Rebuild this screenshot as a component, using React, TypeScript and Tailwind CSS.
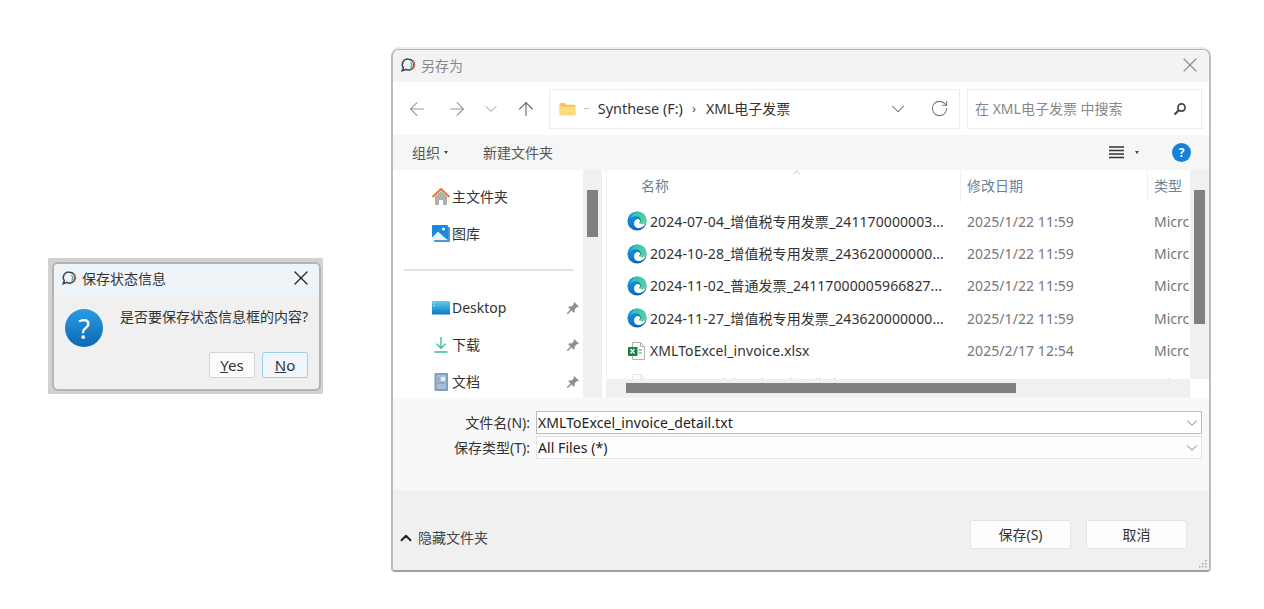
import { ArrowLeft, ArrowRight, ArrowUp, ChevronDown, ChevronUp, RotateCw, X } from 'lucide-react';

const fileRows = [
  { name: '2024-07-04_增值税专用发票_241170000003...', date: '2025/1/22 11:59' },
  { name: '2024-10-28_增值税专用发票_243620000000...', date: '2025/1/22 11:59' },
  { name: '2024-11-02_普通发票_24117000005966827...', date: '2025/1/22 11:59' },
  { name: '2024-11-27_增值税专用发票_243620000000...', date: '2025/1/22 11:59' },
];

function AppIcon() {
  return (
    <svg viewBox="0 0 16 16" className="h-[16px] w-[16px] shrink-0">
      <path d="M8.500 2.200a5.400 5.400 0 1 1-2.600 10.100L2.200 13.800l1.100-3.300A5.300 5.300 0 0 1 8.500 2.200Z" fill="none" stroke="#36464f" strokeWidth="1.500" />
      <path d="M10.400 5.200a3.400 3.400 0 0 1 0 5.400" fill="none" stroke="#2bb8c4" strokeWidth="1.400" />
      <path d="M12.600 3.600a5.400 5.400 0 0 1 0 8.400" fill="none" stroke="#e8604c" strokeWidth="1.500" />
    </svg>
  );
}

function EdgeIcon() {
  return (
    <svg viewBox="0 0 20 20" className="h-[20px] w-[20px] shrink-0">
      <defs>
        <linearGradient id="edgeBlue" x1="0" y1="0" x2="0.6" y2="1">
          <stop offset="0" stopColor="#1c9bea" />
          <stop offset="1" stopColor="#0a66bd" />
        </linearGradient>
        <linearGradient id="edgeGreen" x1="0" y1="0" x2="1" y2="1">
          <stop offset="0" stopColor="#2fb5c9" />
          <stop offset="1" stopColor="#62dc7c" />
        </linearGradient>
      </defs>
      <circle cx="10" cy="10" r="9.600" fill="url(#edgeBlue)" />
      <path d="M3 7.500C4.500 2.600 9 .4 10 .4c5.600 0 9.600 4.400 9.600 9.200 0 2.600-2 3.600-4.200 3.600-1.600 0-3-.5-3.600-1.200 1.400-.4 2-1.400 2-2.400C13.800 7 11.800 5.200 9.200 5.200 6.500 5.200 4.300 6 3 7.500Z" fill="url(#edgeGreen)" />
      <path d="M7 12.800c0-2.600 1.500-4.700 3.900-4.700 1.300 0 2.100.9 2.100 1.800 0 .9-.6 1.500-1.300 1.900.8.900 2.200 1.400 3.700 1.400 1 0 2.200-.3 3.300-1.100-.9 2.500-3.300 5-6.900 5-2.800 0-4.800-2.200-4.800-4.300Z" fill="#fff" />
    </svg>
  );
}

function ExcelIcon() {
  return (
    <svg viewBox="0 0 20 20" className="h-[20px] w-[20px] shrink-0">
      <path d="M5.500 1.500h8l4 4v13h-12Z" fill="#fff" stroke="#b4b4b4" />
      <path d="M13.500 1.500v4h4" fill="none" stroke="#b4b4b4" />
      <rect x="1" y="6" width="9.500" height="9" rx="1" fill="#17804a" />
      <path d="M3.500 8l4 4.500M7.500 8l-4 4.500" stroke="#fff" strokeWidth="1.300" />
      <path d="M11.500 9h3.500M11.500 12h3.500" stroke="#7cc29a" strokeWidth="1.300" />
    </svg>
  );
}

function HomeIcon() {
  return (
    <svg viewBox="0 0 20 20" className="h-[20px] w-[20px]">
      <path d="M4 9.500 10 4l6 5.500V18h-4v-5H8v5H4Z" fill="#b0b0b0" />
      <path d="M1.500 10 10 2l8.500 8" fill="none" stroke="#e8762a" strokeWidth="1.900" />
    </svg>
  );
}

function GalleryIcon() {
  return (
    <svg viewBox="0 0 20 20" className="h-[20px] w-[20px]">
      <rect x="3" y="3" width="16" height="15" rx="1" fill="#4a97dc" />
      <rect x="1" y="1" width="16" height="15" rx="1" fill="#1a87e0" />
      <circle cx="12.500" cy="5" r="1.500" fill="#fff" />
      <path d="M1 13.500 7 7.500l6 5.500 4 3H1Z" fill="#e9f3fb" />
    </svg>
  );
}

function DesktopIcon() {
  return (
    <svg viewBox="0 0 20 20" className="h-[20px] w-[20px]">
      <defs>
        <linearGradient id="desktopFill" x1="0" y1="0" x2="0" y2="1">
          <stop offset="0" stopColor="#5fd0ec" />
          <stop offset="1" stopColor="#0d76c4" />
        </linearGradient>
      </defs>
      <rect x="1" y="3" width="18" height="13.500" rx="0.500" fill="url(#desktopFill)" />
      <path d="M2.500 5h1M2.500 7.500h1" stroke="#fff" strokeWidth="1" />
    </svg>
  );
}

function DownloadIcon() {
  return (
    <svg viewBox="0 0 20 20" className="h-[20px] w-[20px]" fill="none" stroke="#3cc39a" strokeWidth="1.400">
      <path d="M10 2v11M5.500 8.800 10 13.200l4.500-4.400" />
      <path d="M3.500 17h13" strokeWidth="1.600" />
    </svg>
  );
}

function DocIcon() {
  return (
    <svg viewBox="0 0 20 20" className="h-[20px] w-[20px]">
      <rect x="3.500" y="1" width="13.500" height="18" rx="1" fill="#7f9fc2" />
      <rect x="5.500" y="3" width="9.500" height="14" fill="#a9bfd6" />
      <rect x="10" y="5" width="4" height="4" fill="#e8eef5" />
      <path d="M6.500 6h2M6.500 8h2M6.500 11h7" stroke="#6d8db0" />
    </svg>
  );
}

function PinIcon() {
  return (
    <svg viewBox="0 0 14 14" className="h-[14px] w-[14px]">
      <path d="M8.300 1 13 5.700l-1.200.6-.8-.3-2.400 2.400.2 2.300-1 1-2.200-2.200L2 13l-1 0 0-1 3.400-3.600L2.300 6.300l1-1 2.300.2L8 3.100l-.3-.8Z" fill="#8f8f8f" />
    </svg>
  );
}

function SideItem({ icon, label, pinned = false }: { icon: React.ReactNode; label: string; pinned?: boolean }) {
  return (
    <div className="flex h-[37px] shrink-0 items-center pl-[38px] pr-[3px]">
      <span className="flex w-[21px] shrink-0 justify-start">{icon}</span>
      <span className="flex-1 text-[14px] text-[#333]">{label}</span>
      {pinned && <PinIcon />}
    </div>
  );
}

function FormRow({ label, value, active = false }: { label: string; value: string; active?: boolean }) {
  return (
    <div className="flex h-[25px] items-center">
      <span className="w-[137px] text-right text-[14px] text-[#333]">{label}</span>
      <div className={active
        ? 'ml-[6px] flex h-[23px] flex-1 items-center justify-between border border-[#bdbdbd] bg-white pl-[1px]'
        : 'ml-[6px] flex h-[23px] flex-1 items-center justify-between border border-[#e4e4e4] bg-[#fdfdfd] pl-[1px]'}>
        <span className="text-[14px] tracking-[0.07px] text-[#222]">{value}</span>
        <ChevronDown className="h-[18px] w-[18px] text-[#777]" strokeWidth={1.3} />
      </div>
    </div>
  );
}

export default function App() {
  return (
    <div className="relative h-[609px] w-[1264px] overflow-hidden bg-white font-['Noto_Sans','Noto_Sans_CJK_SC',sans-serif]">
      {/* small confirm box */}
      <div className="absolute left-[48px] top-[258px] h-[136px] w-[275px] bg-[#d2d2d2] pb-[3px] pl-[4px] pr-[2px] pt-[4px]">
        <div className="flex h-full flex-col overflow-hidden rounded-[6px] border-2 border-[#b4b4b4] bg-[#f0f0f0]">
          <div className="flex h-[31px] shrink-0 items-center bg-[#eff4f8] pb-[3px] pl-[7px] pr-[6px]">
            <AppIcon />
            <span className="ml-[5px] flex-1 text-[14px] text-[#333]">保存状态信息</span>
            <X className="h-[24px] w-[24px] text-[#222]" strokeWidth={1.3} />
          </div>
          <div className="flex flex-1 flex-col pl-[11px] pr-[11px]">
            <div className="mt-[14px] flex items-start">
              <div className="flex h-[38px] w-[38px] shrink-0 items-center justify-center rounded-full bg-linear-to-b from-[#2a9be3] to-[#0b69b4] text-[27px] leading-none text-white">?</div>
              <span className="ml-[17px] whitespace-nowrap text-[14px] leading-[16px] text-[#333]">是否要保存状态信息框的内容?</span>
            </div>
            <div className="mt-[5px] flex justify-end gap-[7px]">
              <button className="h-[26px] w-[46px] rounded-[2px] border border-[#d4d4d4] bg-[#fbfbfb] text-[15px] text-[#333]"><u>Y</u>es</button>
              <button className="h-[26px] w-[46px] rounded-[2px] border border-[#9fd0ee] bg-[#f0f6fb] text-[15px] text-[#333]"><u>N</u>o</button>
            </div>
          </div>
        </div>
      </div>

      {/* save as window */}
      <div className="absolute left-[391px] top-[49px] flex h-[523px] w-[820px] flex-col overflow-hidden rounded-t-[8px] rounded-b-[4px] border-t border-r-2 border-b-2 border-l-2 border-t-[#b4b4b4] border-r-[#bcbcbc] border-b-[#a2a2a2] border-l-[#bcbcbc] bg-white shadow-[0_-2px_0_#ececec]">
        <div className="flex h-[32px] shrink-0 items-center bg-[#f3f3f3] pb-[2px] pl-[7px] pr-[7px]">
          <AppIcon />
          <span className="ml-[5px] flex-1 text-[14px] text-[#888]">另存为</span>
          <X className="h-[24px] w-[24px] text-[#8a8a8a]" strokeWidth={1.1} />
        </div>

        <div className="flex h-[53px] shrink-0 items-center bg-white pl-[13px] pr-[7px]">
          <ArrowLeft className="h-[22px] w-[22px] shrink-0 text-[#999]" strokeWidth={1.2} />
          <ArrowRight className="ml-[18px] h-[22px] w-[22px] shrink-0 text-[#999]" strokeWidth={1.2} />
          <ChevronDown className="ml-[13px] h-[20px] w-[20px] shrink-0 text-[#999]" strokeWidth={1.2} />
          <ArrowUp className="ml-[14px] h-[22px] w-[22px] shrink-0 text-[#666]" strokeWidth={1.2} />
          <div className="ml-[12px] flex h-[40px] w-[411px] shrink-0 items-center border border-[#ececec] pl-[9px] pr-[10px]">
            <svg viewBox="0 0 18 16" className="h-[14px] w-[17px]">
              <path d="M0 2a1 1 0 0 1 1-1h5l2 2h9a1 1 0 0 1 1 1v10a1 1 0 0 1-1 1H1a1 1 0 0 1-1-1Z" fill="#f6c34c" />
              <path d="M0 5h18v9a1 1 0 0 1-1 1H1a1 1 0 0 1-1-1Z" fill="#fcdc7a" />
            </svg>
            <span className="ml-[8px] text-[9px] leading-none text-[#777]">··</span>
            <span className="ml-[9px] text-[14.4px] text-[#333]">Synthese (F:)</span>
            <span className="ml-[9px] text-[13px] text-[#555]">›</span>
            <span className="ml-[10px] flex-1 text-[14px] text-[#333]">XML电子发票</span>
            <ChevronDown className="h-[22px] w-[22px] text-[#666]" strokeWidth={1.1} />
            <RotateCw className="ml-[21px] h-[19px] w-[19px] text-[#777]" strokeWidth={1.3} />
          </div>
          <div className="ml-[7px] flex h-[40px] flex-1 items-center justify-between border border-[#ececec] pl-[7px] pr-[14px]">
            <span className="text-[14px] text-[#888]">在 XML电子发票 中搜索</span>
            <svg viewBox="0 0 14 14" className="h-[14px] w-[14px]" fill="none" stroke="#444">
              <circle cx="8.500" cy="5.500" r="3.600" strokeWidth="1.700" />
              <path d="M6 8 1.500 12.500" strokeWidth="2.200" />
            </svg>
          </div>
        </div>

        <div className="flex h-[35px] shrink-0 items-center bg-[#f5f6f6] pl-[19px] pr-[18px]">
          <span className="text-[14px] text-[#555]">组织</span>
          <span className="ml-[4px] h-0 w-0 border-x-[2px] border-t-[3px] border-x-transparent border-t-[#444]" />
          <span className="ml-[35px] flex-1 text-[14px] text-[#555]">新建文件夹</span>
          <svg viewBox="0 0 15 13" className="h-[13px] w-[15px]" stroke="#333" strokeWidth="1.300">
            <path d="M0 1h15M0 4.500h15M0 8h15M0 11.500h15" />
          </svg>
          <span className="ml-[11px] h-0 w-0 border-x-[2px] border-t-[3px] border-x-transparent border-t-[#444]" />
          <span className="ml-[33px] flex h-[19px] w-[19px] items-center justify-center rounded-full bg-[#1283d8] text-[12px] font-bold leading-none text-white">?</span>
        </div>

        <div className="flex h-[228px] shrink-0">
          <div className="flex w-[190px] shrink-0 flex-col overflow-hidden pt-[8px]">
            <SideItem icon={<HomeIcon />} label="主文件夹" />
            <SideItem icon={<GalleryIcon />} label="图库" />
            <div className="ml-[11px] mr-[9px] mt-[17px] mb-[18px] h-[2px] shrink-0 bg-[#e2e2e2]" />
            <SideItem icon={<DesktopIcon />} label="Desktop" pinned />
            <SideItem icon={<DownloadIcon />} label="下载" pinned />
            <SideItem icon={<DocIcon />} label="文档" pinned />
          </div>
          <div className="w-[19px] shrink-0 bg-[#f0f0f0] px-[4px] pt-[20px]">
            <div className="h-[47px] bg-[#808080]" />
          </div>

          <div className="ml-[4px] flex min-w-0 flex-1 flex-col border-l border-[#f0f0f0]">
            <div className="relative flex min-h-0 flex-1 flex-col overflow-hidden">
              <div className="flex h-[35px] shrink-0 items-start text-[14px] text-[#6f8296]">
                <span className="ml-[34px] w-[319px] leading-[32px]">名称</span>
                <span className="w-[187px] border-l border-[#f0f0f0] pl-[6px] leading-[32px]">修改日期</span>
                <span className="border-l border-[#f0f0f0] pl-[6px] leading-[32px]">类型</span>
              </div>
              <ChevronUp className="absolute left-[184px] top-[-3px] h-[11px] w-[11px] text-[#999]" strokeWidth={1.4} />
              {fileRows.map((row) => (
                <div key={row.name} className="flex h-[32.4px] shrink-0 items-center overflow-hidden">
                  <span className="ml-[20px] w-[23px] shrink-0"><EdgeIcon /></span>
                  <span className="w-[317px] shrink-0 text-[14px] tracking-[0.09px] text-[#333]">{row.name}</span>
                  <span className="w-[187px] shrink-0 text-[14px] tracking-[0.07px] text-[#777]">{row.date}</span>
                  <span className="text-[14px] text-[#777]">Micrc</span>
                </div>
              ))}
              <div className="flex h-[32.4px] shrink-0 items-center overflow-hidden">
                <span className="ml-[20px] w-[23px] shrink-0"><ExcelIcon /></span>
                <span className="w-[317px] shrink-0 text-[14px] tracking-[0.09px] text-[#333]">XMLToExcel_invoice.xlsx</span>
                <span className="w-[187px] shrink-0 text-[14px] tracking-[0.07px] text-[#777]">2025/2/17 12:54</span>
                <span className="text-[14px] text-[#777]">Micrc</span>
              </div>
              <div className="flex h-[32.4px] shrink-0 items-center overflow-hidden opacity-30">
                <span className="ml-[20px] w-[23px] shrink-0"><ExcelIcon /></span>
                <span className="w-[317px] shrink-0 text-[14px] text-[#333]">XMLToExcel_invoice_detail.xlsx</span>
                <span className="w-[187px] shrink-0 text-[14px] text-[#777]">2025/2/17 12:54</span>
                <span className="text-[14px] text-[#777]">Micrc</span>
              </div>
            </div>
            <div className="h-[19px] shrink-0 bg-[#f0f0f0] pl-[19px] pt-[4px]">
              <div className="h-[10px] w-[390px] bg-[#808080]" />
            </div>
          </div>

          <div className="flex w-[19px] shrink-0 flex-col">
            <div className="flex-1 bg-[#f0f0f0] px-[4px] pt-[20px]">
              <div className="h-[134px] bg-[#808080]" />
            </div>
            <div className="h-[19px] bg-white" />
          </div>
        </div>

        <div className="flex h-[92px] shrink-0 flex-col bg-[#f8f8f8] pr-[7px] pt-[12px]">
          <FormRow label="文件名(N):" value="XMLToExcel_invoice_detail.txt" active />
          <FormRow label="保存类型(T):" value="All Files (*)" />
        </div>

        <div className="relative flex flex-1 items-end justify-between bg-[#f0f0f0] pb-[21px] pl-[4px] pr-[22px]">
          <div className="flex items-center pb-[1px]">
            <ChevronUp className="h-[18px] w-[18px] text-[#222]" strokeWidth={2.6} />
            <span className="ml-[3px] text-[14px] text-[#444]">隐藏文件夹</span>
          </div>
          <div className="flex gap-[15px]">
            <button className="h-[29px] w-[101px] rounded-[2px] border border-[#e4e4e4] bg-[#fdfdfd] text-[14px] text-[#333]">保存(S)</button>
            <button className="h-[29px] w-[101px] rounded-[2px] border border-[#e4e4e4] bg-[#fdfdfd] text-[14px] text-[#333]">取消</button>
          </div>
          <svg viewBox="0 0 10 10" className="absolute bottom-[1px] right-[1px] h-[10px] w-[10px]" fill="#a8a8a8">
            <rect x="7" y="1" width="1.500" height="1.500" />
            <rect x="4" y="4" width="1.500" height="1.500" />
            <rect x="7" y="4" width="1.500" height="1.500" />
            <rect x="1" y="7" width="1.500" height="1.500" />
            <rect x="4" y="7" width="1.500" height="1.500" />
            <rect x="7" y="7" width="1.500" height="1.500" />
          </svg>
        </div>
      </div>
    </div>
  );
}
